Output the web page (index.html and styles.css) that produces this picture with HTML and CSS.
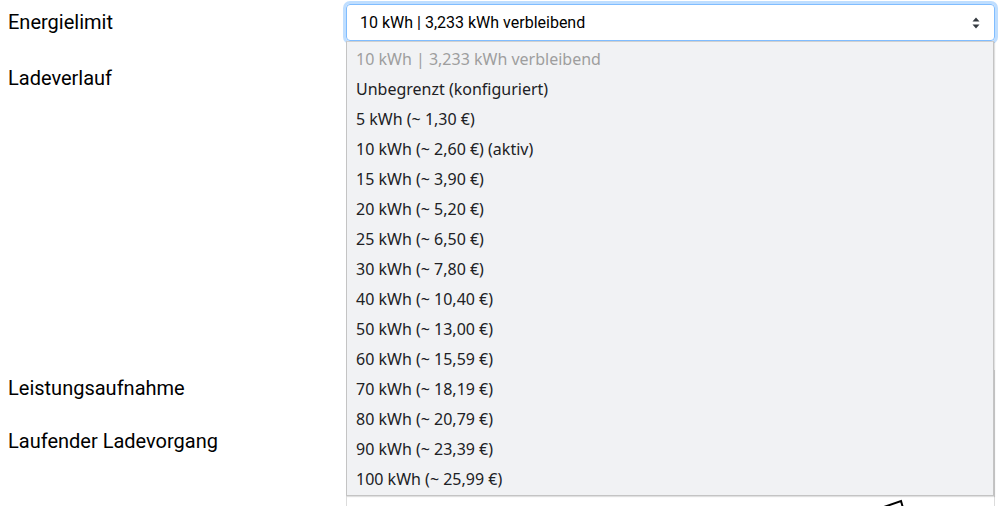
FILE: index.html
```html
<!DOCTYPE html>
<html lang="de">
<head>
<meta charset="utf-8">
<link rel="stylesheet" href="styles.css">
</head>
<body>
<div class="form">
  <div class="label row1">Energielimit</div>
  <div class="field row1">
    <div class="select">
      <span class="select-text">10 kWh | 3,233 kWh verbleibend</span>
      <svg class="arrows" width="10" height="14" viewBox="0 0 10 14"><path d="M1.5 5.5 L5 1.5 L8.5 5.5 Z M1.5 8.5 L5 12.5 L8.5 8.5 Z" fill="#343a40"/></svg>
    </div>
    <ul class="menu">
      <li class="opt disabled">10 kWh | 3,233 kWh verbleibend</li>
      <li class="opt">Unbegrenzt (konfiguriert)</li>
      <li class="opt">5 kWh (~ 1,30 €)</li>
      <li class="opt">10 kWh (~ 2,60 €) (aktiv)</li>
      <li class="opt">15 kWh (~ 3,90 €)</li>
      <li class="opt">20 kWh (~ 5,20 €)</li>
      <li class="opt">25 kWh (~ 6,50 €)</li>
      <li class="opt">30 kWh (~ 7,80 €)</li>
      <li class="opt">40 kWh (~ 10,40 €)</li>
      <li class="opt">50 kWh (~ 13,00 €)</li>
      <li class="opt">60 kWh (~ 15,59 €)</li>
      <li class="opt">70 kWh (~ 18,19 €)</li>
      <li class="opt">80 kWh (~ 20,79 €)</li>
      <li class="opt">90 kWh (~ 23,39 €)</li>
      <li class="opt">100 kWh (~ 25,99 €)</li>
    </ul>
  </div>
  <div class="label row2">Ladeverlauf</div>
  <div class="field row2"><div class="chart"></div></div>
  <div class="label row3">Leistungsaufnahme</div>
  <div class="field row3"><div class="box power"></div></div>
  <div class="label row4">Laufender Ladevorgang</div>
  <div class="field row4">
    <div class="box session">
      <svg class="gauge" width="30" height="12" viewBox="0 0 30 12"><path d="M2 11 L22 4 L24 11" fill="none" stroke="#000" stroke-width="2"/></svg>
    </div>
  </div>
</div>
</body>
</html>
```
FILE: styles.css
```css
* { box-sizing: border-box; }
html, body { margin: 0; padding: 0; background: #fff; }
body { padding: 0 12px 0 8px; overflow: hidden; height: 506px; }
.form {
  display: grid;
  grid-template-columns: 338px 1fr;
  font-family: Roboto, "Liberation Sans", sans-serif;
  color: #000;
}
.label {
  font-size: 20px;
  line-height: 24px;
}
.row1.label { padding-top: 10px; }
.row2.label { padding-top: 25px; height: 329px; }
.row3.label { padding-top: 6px; height: 54px; }
.row4.label { padding-top: 5px; height: 82px; }
.field { position: relative; }
.row1.field { padding-top: 4px; }
.select {
  height: 37px;
  border: 1px solid #80bdff;
  border-radius: 4px;
  box-shadow: 0 0 0 3px rgba(0, 123, 255, 0.25);
  display: flex;
  align-items: center;
  justify-content: space-between;
  padding: 0 13px 0 13px;
  font-size: 16px;
  color: #000;
}
.arrows { display: block; }
.menu {
  position: absolute;
  left: 0;
  top: 41px;
  width: 648px;
  margin: 0;
  padding: 2px 0 1px;
  list-style: none;
  background: #f1f2f4;
  border: 1px solid #c4c4c4;
  border-top-color: #d0d0d0;
  box-shadow: 1px 1px 1px rgba(0,0,0,0.12);
  font-family: "Noto Sans", "Open Sans", sans-serif;
  font-size: 16px;
  color: #202124;
  z-index: 5;
}
.opt {
  height: 30px;
  line-height: 30px;
  padding-left: 9px;
  white-space: nowrap;
}
.opt.disabled { color: #9e9e9e; }
.chart { height: 329px; }
.box {
  border-left: 1px solid #dcdcdc;
  border-right: 1px solid #dcdcdc;
}
.power { height: 54px; }
.session { height: 82px; position: relative; }
.gauge { position: absolute; left: 532px; top: 73px; }
```
